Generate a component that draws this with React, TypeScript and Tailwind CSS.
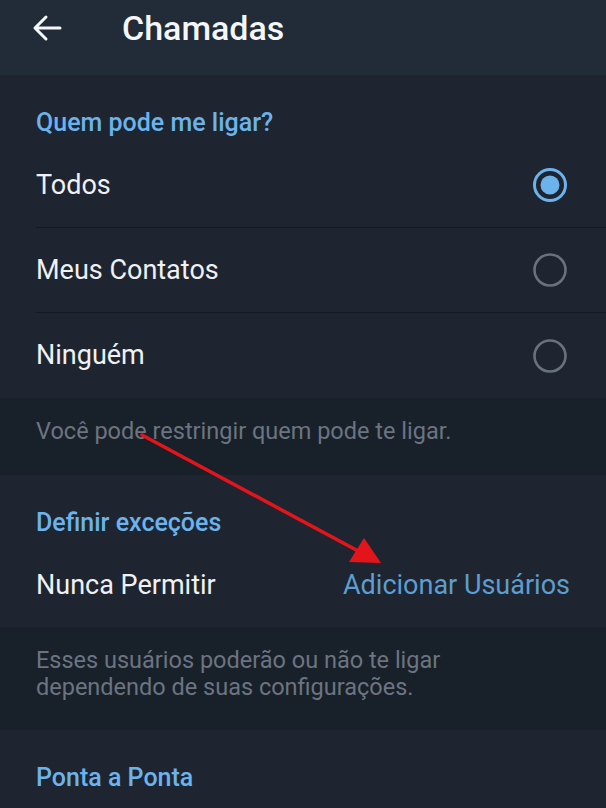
import React from "react";

function Radio({ checked }: { checked?: boolean }) {
  return checked ? (
    <svg width="36" height="36" viewBox="0 0 36 36">
      <circle cx="18" cy="18" r="15.5" fill="none" stroke="#6cb3ec" strokeWidth="3" />
      <circle cx="18" cy="18" r="9.5" fill="#6cb3ec" />
    </svg>
  ) : (
    <svg width="36" height="36" viewBox="0 0 36 36">
      <circle cx="18" cy="18" r="15.5" fill="none" stroke="#69717d" strokeWidth="2.6" />
    </svg>
  );
}

function Heading({ children }: { children: React.ReactNode }) {
  return (
    <div className="h-[68px] pl-[36px] pt-[33px] text-[25px] leading-[29px] font-medium text-[#6cb3ec]">
      {children}
    </div>
  );
}

function RadioRow({ label, checked, last }: { label: string; checked?: boolean; last?: boolean }) {
  return (
    <div className={`ml-[36px] h-[85px] flex items-center justify-between pr-[38px] ${last ? "" : "border-b border-[#141a22]"}`}>
      <span className="text-[27px] text-[#f0f1f3]">{label}</span>
      <Radio checked={checked} />
    </div>
  );
}

export default function App() {
  return (
    <div
      className="relative w-[606px] h-[808px] overflow-hidden bg-[#18202a]"
      style={{ fontFamily: "Roboto, 'Noto Sans', sans-serif" }}
    >
      <div className="h-[75px] bg-[#222b38] flex items-center">
        <svg className="ml-[32px] mb-[20px]" width="30" height="28" viewBox="0 0 30 28">
          <path d="M28 14H4M14 3L3 14l11 11" fill="none" stroke="#f5f6f7" strokeWidth="3" strokeLinecap="round" strokeLinejoin="round" />
        </svg>
        <div className="ml-[60px] mb-[20px] text-[34px] font-medium text-[#f5f6f7] leading-none">Chamadas</div>
      </div>

      <div className="bg-[#1e2531]">
        <Heading>Quem pode me ligar?</Heading>
        <RadioRow label="Todos" checked />
        <RadioRow label="Meus Contatos" />
        <RadioRow label="Ninguém" last />
      </div>

      <div className="h-[77px] pl-[36px] pt-[20px] text-[23.5px] leading-[27px] text-[#6c7480]">
        Você pode restringir quem pode te ligar.
      </div>

      <div className="bg-[#1e2531]">
        <Heading>Definir exceções</Heading>
        <div className="h-[84px] pl-[36px] pr-[36px] flex items-center justify-between">
          <span className="text-[27px] text-[#f0f1f3]">Nunca Permitir</span>
          <span className="text-[27px] text-[#5d9dd0]">Adicionar Usuários</span>
        </div>
      </div>

      <div className="h-[103px] pl-[36px] pt-[20px] text-[23.5px] leading-[27px] text-[#6c7480]">
        <div>Esses usuários poderão ou não te ligar</div>
        <div>dependendo de suas configurações.</div>
      </div>

      <div className="bg-[#1e2531] h-[78px]">
        <Heading>Ponta a Ponta</Heading>
      </div>

      <svg className="absolute left-0 top-0 pointer-events-none" width="606" height="808" viewBox="0 0 606 808">
        <line x1="142" y1="435" x2="360" y2="552" stroke="#e3151b" strokeWidth="3.5" strokeLinecap="round" />
        <polygon points="381,563 349,562 364,538" fill="#e3151b" />
      </svg>
    </div>
  );
}
